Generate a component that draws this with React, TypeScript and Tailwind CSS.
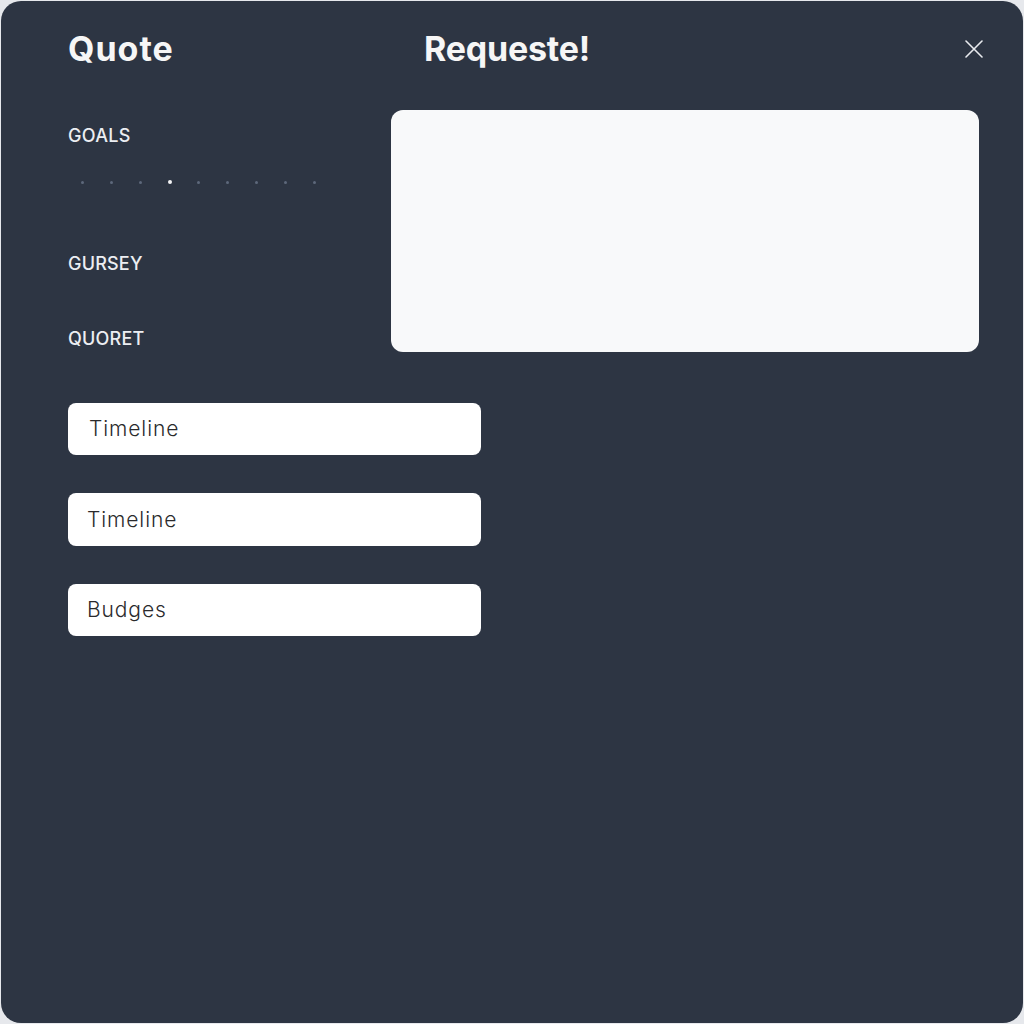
import React from "react";

const dots = [0, 1, 2, 3, 4, 5, 6, 7, 8];

export default function App() {
  return (
    <div className="w-[1024px] h-[1024px] bg-[#e6e8ec] p-[1px]" style={{ fontFamily: "Inter, 'Noto Sans', sans-serif" }}>
      <div className="h-full w-full rounded-[20px] bg-[#2d3543] pl-[67px] pr-[42px] pt-[28px]">
        {/* header */}
        <div className="flex items-center h-10">
          <div className="w-[356px] text-[34px] font-bold text-[#f6f6f6] tracking-[1px] leading-10">Quote</div>
          <div className="text-[34px] font-bold text-[#f6f6f6] tracking-[-0.2px] leading-10">Requeste!</div>
          <div className="ml-auto mr-[-5px] flex items-center justify-center w-[24px] h-[24px]">
            <svg width="18" height="18" viewBox="0 0 18 18" fill="none">
              <path d="M1 1L17 17M17 1L1 17" stroke="#e9ebef" strokeWidth="1.6" strokeLinecap="round" />
            </svg>
          </div>
        </div>

        {/* body */}
        <div className="flex mt-[41px]">
          <div className="w-[323px] flex flex-col pt-[14px]">
            <div className="text-[18px] leading-6 font-medium text-[#eceef2] tracking-[0.3px]">GOALS</div>
            <div className="flex mt-[31px] h-[6px] items-center">
              {dots.map((d) => (
                <div key={d} className="w-[29px] flex justify-center items-center">
                  {d === 3 ? (
                    <div className="w-[4px] h-[4px] rounded-full bg-[#f2f3f5]" />
                  ) : (
                    <div className="w-[3px] h-[3px] rounded-full bg-[#5d687b]" />
                  )}
                </div>
              ))}
            </div>
            <div className="mt-[67px] text-[18px] leading-6 font-medium text-[#eceef2] tracking-[0.2px]">GURSEY</div>
            <div className="mt-[51px] text-[18px] leading-6 font-medium text-[#eceef2] tracking-[0.2px]">QUORET</div>
          </div>
          <div className="w-[588px] h-[242px] rounded-[12px] bg-[#f8f9fa]" />
        </div>

        {/* inputs */}
        <div className="flex flex-col gap-[38px] mt-[51px] w-[413px]">
          <div className="h-[52px] rounded-lg bg-white flex items-center pl-[21px] text-[21px] font-light text-[#2a2a2c] tracking-[0.9px]">Timeline</div>
          <div className="h-[53px] rounded-lg bg-white flex items-center pl-[19px] text-[21px] font-light text-[#2a2a2c] tracking-[0.9px]">Timeline</div>
          <div className="h-[52px] rounded-lg bg-white flex items-center pl-[19px] text-[21px] font-light text-[#2a2a2c] tracking-[0.9px]">Budges</div>
        </div>
      </div>
    </div>
  );
}
